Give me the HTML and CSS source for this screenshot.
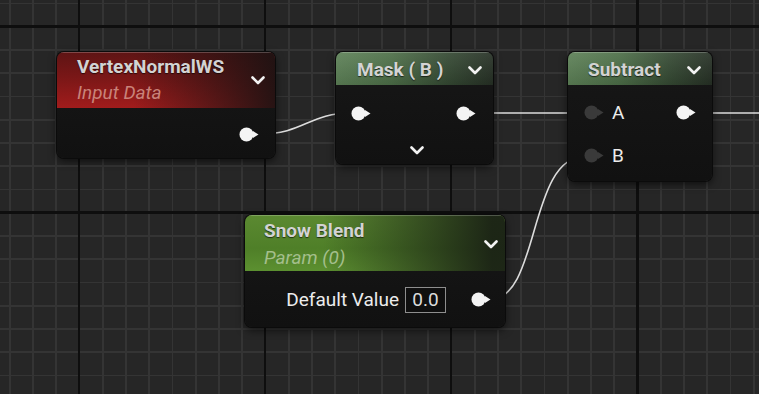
FILE: index.html
```html
<!DOCTYPE html>
<html lang="en">
<head>
    <meta charset="UTF-8">
    <title>Material Graph</title>
    <link rel="stylesheet" href="styles.css">
</head>
<body>

    <div class="graph">
        <!-- Wires sit under the nodes -->
        <svg class="wires" width="759" height="394" viewBox="0 0 759 394">
            <path d="M259 134 C 305 134, 308 113, 352 113" />
            <path d="M474 113 L 586 113" />
            <path d="M694 113 L 759 113" />
            <path d="M489 300 C 541 300, 527 156, 586 156" />
        </svg>

        <!-- VertexNormalWS -->
        <div class="node node-vertex">
            <div class="head head-red">
                <div class="titles">
                    <div class="title">VertexNormalWS</div>
                    <div class="sub sub-red">Input Data</div>
                </div>
                <svg class="chev" width="14" height="9" viewBox="0 0 14 9"><polyline points="1.5,1.5 7,7 12.5,1.5" /></svg>
            </div>
            <div class="body body-vertex">
                <svg class="pin" width="22" height="15" viewBox="0 0 22 15"><circle cx="7.5" cy="7.5" r="7" /><polygon points="14,4 19.5,7.5 14,11" /></svg>
            </div>
        </div>

        <!-- Mask ( B ) -->
        <div class="node node-mask">
            <div class="head head-green head-short">
                <div class="titles">
                    <div class="title">Mask ( B )</div>
                </div>
                <svg class="chev" width="14" height="9" viewBox="0 0 14 9"><polyline points="1.5,1.5 7,7 12.5,1.5" /></svg>
            </div>
            <div class="body body-mask">
                <div class="row">
                    <svg class="pin" width="22" height="15" viewBox="0 0 22 15"><circle cx="7.5" cy="7.5" r="7" /><polygon points="14,4 19.5,7.5 14,11" /></svg>
                    <span class="spacer"></span>
                    <svg class="pin" width="22" height="15" viewBox="0 0 22 15"><circle cx="7.5" cy="7.5" r="7" /><polygon points="14,4 19.5,7.5 14,11" /></svg>
                </div>
                <svg class="chev chev-more" width="14" height="9" viewBox="0 0 14 9"><polyline points="1.5,1.5 7,7 12.5,1.5" /></svg>
            </div>
        </div>

        <!-- Subtract -->
        <div class="node node-subtract">
            <div class="head head-green head-short">
                <div class="titles">
                    <div class="title">Subtract</div>
                </div>
                <svg class="chev" width="14" height="9" viewBox="0 0 14 9"><polyline points="1.5,1.5 7,7 12.5,1.5" /></svg>
            </div>
            <div class="body body-subtract">
                <div class="row">
                    <svg class="pin pin-off" width="22" height="15" viewBox="0 0 22 15"><circle cx="7.5" cy="7.5" r="7" /><polygon points="14,4 19.5,7.5 14,11" /></svg>
                    <span class="label">A</span>
                    <span class="spacer"></span>
                    <svg class="pin" width="22" height="15" viewBox="0 0 22 15"><circle cx="7.5" cy="7.5" r="7" /><polygon points="14,4 19.5,7.5 14,11" /></svg>
                </div>
                <div class="row">
                    <svg class="pin pin-off" width="22" height="15" viewBox="0 0 22 15"><circle cx="7.5" cy="7.5" r="7" /><polygon points="14,4 19.5,7.5 14,11" /></svg>
                    <span class="label">B</span>
                </div>
            </div>
        </div>

        <!-- Snow Blend -->
        <div class="node node-snow">
            <div class="head head-lime">
                <div class="titles">
                    <div class="title">Snow Blend</div>
                    <div class="sub sub-green">Param (0)</div>
                </div>
                <svg class="chev" width="14" height="9" viewBox="0 0 14 9"><polyline points="1.5,1.5 7,7 12.5,1.5" /></svg>
            </div>
            <div class="body body-snow">
                <span class="label">Default Value</span>
                <span class="value">0.0</span>
                <svg class="pin" width="22" height="15" viewBox="0 0 22 15"><circle cx="7.5" cy="7.5" r="7" /><polygon points="14,4 19.5,7.5 14,11" /></svg>
            </div>
        </div>
    </div>

</body>
</html>
```

FILE: styles.css
```css
* {
    box-sizing: border-box;
    margin: 0;
    padding: 0;
}

body {
    width: 759px;
    height: 394px;
    overflow: hidden;
    background: #262626;
    font-family: "Roboto", "Liberation Sans", sans-serif;
}

/* Graph canvas with minor and major grid lines */
.graph {
    position: relative;
    width: 759px;
    height: 394px;
    overflow: hidden;
    background-color: #262626;
    background-image:
        repeating-linear-gradient(to right, #0e0e0e -108px, #0e0e0e -105.5px, transparent -105.5px, transparent 78px),
        repeating-linear-gradient(to bottom, #0e0e0e -160.5px, #0e0e0e -158px, transparent -158px, transparent 25.5px),
        repeating-linear-gradient(to right, #343434 9px, #343434 10.6px, transparent 10.6px, transparent 32.25px),
        repeating-linear-gradient(to bottom, #343434 2.7px, #343434 4.3px, transparent 4.3px, transparent 25.95px);
}

.wires {
    position: absolute;
    left: 0;
    top: 0;
}

.wires path {
    fill: none;
    stroke: #dcdcdc;
    stroke-width: 1.6;
}

/* Nodes */
.node {
    position: absolute;
    display: flex;
    flex-direction: column;
    border-radius: 7px;
    overflow: hidden;
    background: linear-gradient(#171717, #111111);
    box-shadow: 0 0 0 1px #0b0b0b, 0 3px 8px rgba(0, 0, 0, 0.65);
}

.node-vertex {
    left: 57px;
    top: 52px;
    width: 218px;
    height: 106px;
}

.node-mask {
    left: 336px;
    top: 52px;
    width: 157px;
    height: 112px;
}

.node-subtract {
    left: 568px;
    top: 52px;
    width: 144px;
    height: 129px;
}

.node-snow {
    left: 245px;
    top: 215px;
    width: 260px;
    height: 112px;
}

/* Header */
.head {
    display: flex;
    align-items: center;
    height: 56px;
    padding: 2px 10px 0 20px;
    box-shadow: inset 0 1px 0 rgba(255, 255, 255, 0.22);
}

.head-short {
    height: 33px;
    padding-top: 3px;
}

.head-red {
    background:
        linear-gradient(to right, rgba(22, 18, 18, 0) 35%, rgba(26, 18, 18, 0.9) 100%),
        linear-gradient(to bottom, #5e1414 0%, #7a1717 45%, #a11c1c 100%);
}

.head-green {
    background:
        linear-gradient(to bottom, rgba(255, 255, 255, 0.08), rgba(0, 0, 0, 0.1)),
        linear-gradient(to right, #5d8157 0%, #4d6f48 35%, #354a33 70%, #263025 100%);
}

.head-lime {
    padding-left: 19px;
    padding-right: 7px;
    background:
        linear-gradient(to right, rgba(22, 26, 20, 0) 30%, rgba(24, 30, 20, 0.92) 95%),
        linear-gradient(to bottom, #5b8931 0%, #4f7f28 60%, #5c9030 100%);
}

.node-vertex .head {
    padding-top: 0;
}

.node-subtract .head {
    padding-right: 11px;
}

.node-mask .head {
    padding-left: 21px;
    padding-right: 11px;
}

.titles {
    flex: 1;
}

.title {
    font-size: 19px;
    font-weight: 700;
    line-height: 22px;
    color: #d3d3d3;
    text-shadow: 0 1px 1px rgba(0, 0, 0, 0.6);
    white-space: nowrap;
}

.sub {
    margin-top: 4px;
    font-size: 19px;
    font-style: italic;
    line-height: 22px;
    white-space: nowrap;
}

.sub-red {
    color: #c9837a;
}

.sub-green {
    margin-top: 5px;
    color: #a4bf8c;
}

.chev {
    flex: none;
}

.chev polyline {
    fill: none;
    stroke: #f2f2f2;
    stroke-width: 2.6;
    stroke-linecap: round;
    stroke-linejoin: round;
}

/* Pins */
.pin {
    flex: none;
    display: block;
}

.pin circle,
.pin polygon {
    fill: #f4f4f4;
}

.pin-off circle,
.pin-off polygon {
    fill: #3a3a3a;
}

/* Bodies */
.body {
    flex: 1;
    display: flex;
}

.body-vertex {
    justify-content: flex-end;
    align-items: center;
    padding: 2px 14px 0 0;
}

.body-mask {
    flex-direction: column;
    padding: 21px 15px 0 15px;
}

.body-subtract {
    flex-direction: column;
    gap: 28px;
    padding: 20px 14px 0 16px;
}

.row {
    display: flex;
    align-items: center;
    height: 15px;
}

.spacer {
    flex: 1;
}

.chev-more {
    align-self: center;
    margin-top: 25px;
    margin-left: 4px;
}

.label {
    font-size: 19px;
    line-height: 22px;
    color: #ececec;
    white-space: nowrap;
}

.body-subtract .label {
    margin-left: 6px;
}

.body-snow {
    justify-content: flex-end;
    align-items: center;
    padding: 1px 12px 0 0;
}

.value {
    width: 41px;
    height: 26px;
    margin: 0 25px 0 6px;
    border: 1px solid #8e8e8e;
    background: #0f0f0f;
    color: #dcdcdc;
    font-size: 19px;
    line-height: 24px;
    text-align: center;
}
```
